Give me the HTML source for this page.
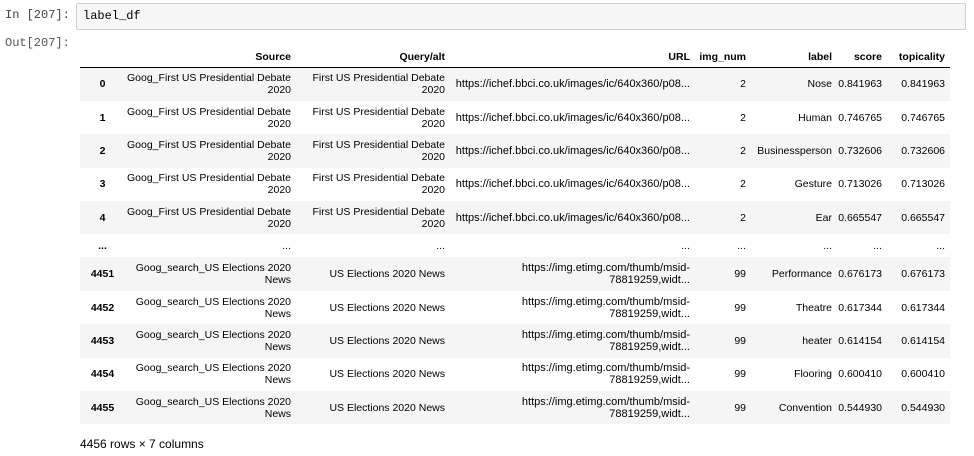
<!DOCTYPE html>
<html><head><meta charset="utf-8"><style>
body{margin:0;background:#fff;width:974px;height:456px;overflow:hidden;position:relative;font-family:"Liberation Sans",Arial,sans-serif;}
.mono{font-family:"Liberation Mono",monospace;font-size:12px;position:absolute;}
#inp{position:absolute;left:76px;top:3px;width:888px;height:25px;border:1px solid #cfcfcf;background:#f7f7f7;border-radius:2px;}
table{position:absolute;left:80px;top:46px;border-collapse:collapse;table-layout:fixed;font-size:10.5px;color:#000;}
td,th{padding:0 5px 0 0;text-align:right;line-height:12px;white-space:nowrap;overflow:hidden;vertical-align:middle;}
thead th{height:21px;font-weight:bold;border-bottom:1px solid #000;vertical-align:middle;}
tbody tr{height:33.4px;}
tbody tr.g{background:#f5f5f5;}
tbody tr.d{height:23px;}
tbody th{text-align:center;font-weight:bold;padding:0;}
td.u{font-size:11px;}
</style></head><body>
<div class="mono" style="left:5px;top:8px;color:#444">In [207]:</div>
<div id="inp"><div class="mono" style="left:6px;top:5px;color:#000">label_df</div></div>
<div class="mono" style="left:5px;top:36px;color:#555">Out[207]:</div>
<table>
<colgroup><col style="width:45px"><col style="width:171px"><col style="width:154px"><col style="width:245px"><col style="width:56px"><col style="width:86px"><col style="width:50px"><col style="width:63px"></colgroup>
<thead><tr><th></th><th>Source</th><th>Query/alt</th><th>URL</th><th>img_num</th><th>label</th><th>score</th><th>topicality</th></tr></thead>
<tbody>
<tr class="g"><th>0</th><td>Goog_First US Presidential Debate<br>2020</td><td>First US Presidential Debate<br>2020</td><td class="u">https://ichef.bbci.co.uk/images/ic/640x360/p08...</td><td>2</td><td>Nose</td><td>0.841963</td><td>0.841963</td></tr>
<tr><th>1</th><td>Goog_First US Presidential Debate<br>2020</td><td>First US Presidential Debate<br>2020</td><td class="u">https://ichef.bbci.co.uk/images/ic/640x360/p08...</td><td>2</td><td>Human</td><td>0.746765</td><td>0.746765</td></tr>
<tr class="g"><th>2</th><td>Goog_First US Presidential Debate<br>2020</td><td>First US Presidential Debate<br>2020</td><td class="u">https://ichef.bbci.co.uk/images/ic/640x360/p08...</td><td>2</td><td>Businessperson</td><td>0.732606</td><td>0.732606</td></tr>
<tr><th>3</th><td>Goog_First US Presidential Debate<br>2020</td><td>First US Presidential Debate<br>2020</td><td class="u">https://ichef.bbci.co.uk/images/ic/640x360/p08...</td><td>2</td><td>Gesture</td><td>0.713026</td><td>0.713026</td></tr>
<tr class="g"><th>4</th><td>Goog_First US Presidential Debate<br>2020</td><td>First US Presidential Debate<br>2020</td><td class="u">https://ichef.bbci.co.uk/images/ic/640x360/p08...</td><td>2</td><td>Ear</td><td>0.665547</td><td>0.665547</td></tr>
<tr class="d"><th>...</th><td>...</td><td>...</td><td>...</td><td>...</td><td>...</td><td>...</td><td>...</td></tr>
<tr class="g"><th>4451</th><td>Goog_search_US Elections 2020<br>News</td><td>US Elections 2020 News</td><td class="u">https://img.etimg.com/thumb/msid-<br>78819259,widt...</td><td>99</td><td>Performance</td><td>0.676173</td><td>0.676173</td></tr>
<tr><th>4452</th><td>Goog_search_US Elections 2020<br>News</td><td>US Elections 2020 News</td><td class="u">https://img.etimg.com/thumb/msid-<br>78819259,widt...</td><td>99</td><td>Theatre</td><td>0.617344</td><td>0.617344</td></tr>
<tr class="g"><th>4453</th><td>Goog_search_US Elections 2020<br>News</td><td>US Elections 2020 News</td><td class="u">https://img.etimg.com/thumb/msid-<br>78819259,widt...</td><td>99</td><td>heater</td><td>0.614154</td><td>0.614154</td></tr>
<tr><th>4454</th><td>Goog_search_US Elections 2020<br>News</td><td>US Elections 2020 News</td><td class="u">https://img.etimg.com/thumb/msid-<br>78819259,widt...</td><td>99</td><td>Flooring</td><td>0.600410</td><td>0.600410</td></tr>
<tr class="g"><th>4455</th><td>Goog_search_US Elections 2020<br>News</td><td>US Elections 2020 News</td><td class="u">https://img.etimg.com/thumb/msid-<br>78819259,widt...</td><td>99</td><td>Convention</td><td>0.544930</td><td>0.544930</td></tr>
</tbody></table>
<div style="position:absolute;left:80px;top:437px;font-size:12px;">4456 rows × 7 columns</div>
</body></html>
